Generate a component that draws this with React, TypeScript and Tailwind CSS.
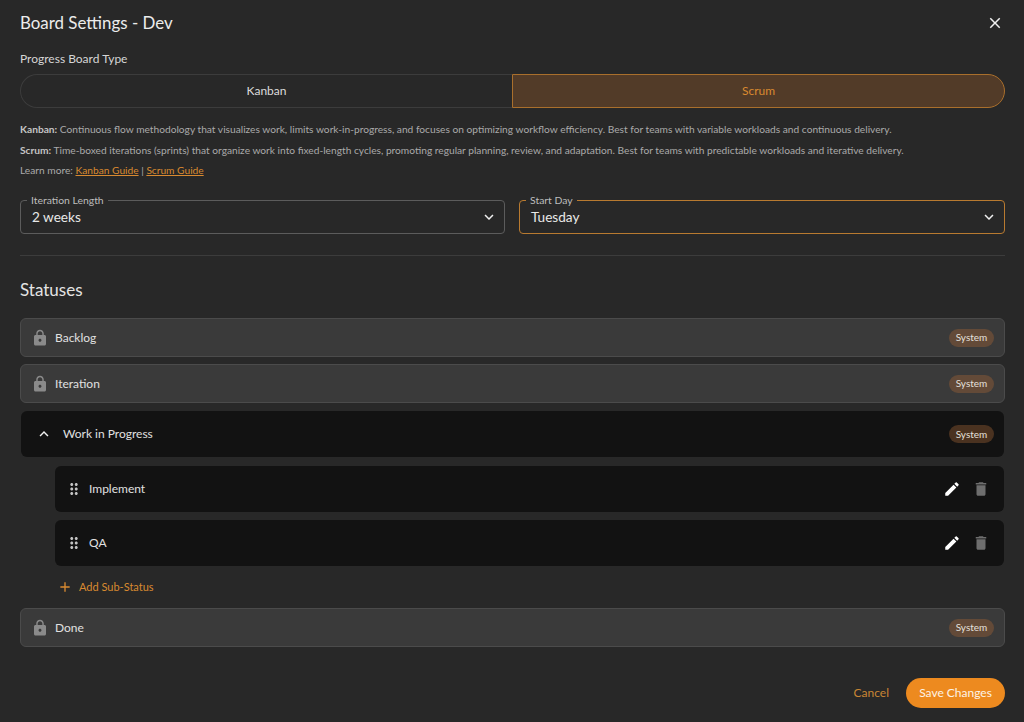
const P = {
  lock: "M18 8h-1V6c0-2.76-2.24-5-5-5S7 3.24 7 6v2H6c-1.1 0-2 .9-2 2v10c0 1.1.9 2 2 2h12c1.1 0 2-.9 2-2V10c0-1.1-.9-2-2-2zm-6 9c-1.1 0-2-.9-2-2s.9-2 2-2 2 .9 2 2-.9 2-2 2zm3.1-9H8.9V6c0-1.71 1.39-3.1 3.1-3.1 1.71 0 3.1 1.39 3.1 3.1v2z",
  up: "m12 8-6 6 1.41 1.41L12 10.83l4.59 4.58L18 14z",
  down: "M7.41 8.59 12 13.17l4.59-4.58L18 10l-6 6-6-6 1.41-1.41z",
  drag: "M11 18c0 1.1-.9 2-2 2s-2-.9-2-2 .9-2 2-2 2 .9 2 2zm-2-8c-1.1 0-2 .9-2 2s.9 2 2 2 2-.9 2-2-.9-2-2-2zm0-6c-1.1 0-2 .9-2 2s.9 2 2 2 2-.9 2-2-.9-2-2-2zm6 4c1.1 0 2-.9 2-2s-.9-2-2-2-2 .9-2 2 .9 2 2 2zm0 2c-1.1 0-2 .9-2 2s.9 2 2 2 2-.9 2-2-.9-2-2-2zm0 6c-1.1 0-2 .9-2 2s.9 2 2 2 2-.9 2-2-.9-2-2-2z",
  edit: "M3 17.25V21h3.75L17.81 9.94l-3.75-3.75L3 17.25zM20.71 7.04c.39-.39.39-1.02 0-1.41l-2.34-2.34a.9959.9959 0 0 0-1.41 0l-1.83 1.83 3.75 3.75 1.83-1.83z",
  trash: "M6 19c0 1.1.9 2 2 2h8c1.1 0 2-.9 2-2V7H6v12zM19 4h-3.5l-1-1h-5l-1 1H5v2h14V4z",
  add: "M19 13h-6v6h-2v-6H5v-2h6V5h2v6h6v2z",
  close: "M19 6.41 17.59 5 12 10.59 6.41 5 5 6.41 10.59 12 5 17.59 6.41 19 12 13.41 17.59 19 19 17.59 13.41 12z",
};

function Icon({ d, className }: { d: string; className: string }) {
  return (
    <svg viewBox="0 0 24 24" fill="currentColor" className={className}>
      <path d={d} />
    </svg>
  );
}

function Badge({ dark }: { dark?: boolean }) {
  return (
    <span
      className={`flex h-[18px] w-[45px] items-center justify-center rounded-full text-[10px] text-[#e4e0dc] ${
        dark ? "bg-[#4a3220]" : "bg-[#634a38]"
      }`}
    >
      System
    </span>
  );
}

function LockedRow({ label }: { label: string }) {
  return (
    <div className="flex h-[39px] items-center rounded-[6px] border border-[#4b4b4b] bg-[#3a3a3a] pl-[10px] pr-[10px]">
      <Icon d={P.lock} className="h-[18px] w-[18px] text-[#8a8a8a]" />
      <span className="ml-[6px] flex-1 text-[12px] text-[#e0e0e0]">{label}</span>
      <Badge />
    </div>
  );
}

function SubRow({ label }: { label: string }) {
  return (
    <div className="flex h-[46px] items-center rounded-[6px] bg-[#121212] pl-[10px] pr-[14px]">
      <Icon d={P.drag} className="h-[18px] w-[18px] text-[#c4c4c4]" />
      <span className="ml-[6px] flex-1 text-[12px] text-[#e0e0e0]">{label}</span>
      <Icon d={P.edit} className="h-[18px] w-[18px] text-white" />
      <Icon d={P.trash} className="ml-[11px] h-[18px] w-[18px] text-[#6e6e6e]" />
    </div>
  );
}

function Select({ label, value, active, className }: { label: string; value: string; active?: boolean; className: string }) {
  return (
    <div
      className={`relative flex h-[34px] items-center justify-between rounded-[4px] border pl-[11px] pr-[6px] ${className} ${
        active ? "border-[#b87a30]" : "border-[#5c5c5c]"
      }`}
    >
      <span className="absolute left-[6px] top-[-7px] bg-[#282828] px-[4px] text-[10.4px] leading-[12px] text-[#bdbdbd]">
        {label}
      </span>
      <span className="text-[13.6px] text-[#e8e8e8]">{value}</span>
      <Icon d={P.down} className="h-[18px] w-[18px] text-[#f0f0f0]" />
    </div>
  );
}

export default function App() {
  return (
    <div
      className="flex h-[722px] w-[1024px] flex-col overflow-hidden bg-[#282828] pl-[20px] pr-[19px] text-[#e8e8e8]"
      style={{ fontFamily: "Lato, 'Liberation Sans', sans-serif" }}
    >
      <div className="flex h-[46px] shrink-0 items-center justify-between">
        <h1 className="text-[16.9px] font-normal leading-[24px] text-[#ececec]">Board Settings - Dev</h1>
        <Icon d={P.close} className="mr-[1px] h-[18px] w-[18px] text-[#f0f0f0]" />
      </div>

      <div className="mt-[4px] text-[12px] leading-[18px] text-[#d6d6d6]">Progress Board Type</div>

      <div className="mt-[6px] flex h-[34px]">
        <div className="flex flex-1 items-center justify-center rounded-l-full border border-r-0 border-[#3c3c3c] text-[12px] text-[#dcdcdc]">
          Kanban
        </div>
        <div className="flex w-[493px] items-center justify-center rounded-r-full border border-[#a96f2c] bg-[#523b28] text-[12px] text-[#d98a30]">
          Scrum
        </div>
      </div>

      <div className="mt-[12px] flex flex-col gap-[2.5px] text-[10.2px] leading-[18px] text-[#aaaaaa]">
        <p>
          <b className="font-bold text-[#c4c4c4]">Kanban:</b> Continuous flow methodology that visualizes work, limits
          work-in-progress, and focuses on optimizing workflow efficiency. Best for teams with variable workloads and
          continuous delivery.
        </p>
        <p>
          <b className="font-bold text-[#c4c4c4]">Scrum:</b> Time-boxed iterations (sprints) that organize work into
          fixed-length cycles, promoting regular planning, review, and adaptation. Best for teams with predictable
          workloads and iterative delivery.
        </p>
        <p>
          Learn more: <a className="text-[#d98a30] underline">Kanban Guide</a> |{" "}
          <a className="text-[#d98a30] underline">Scrum Guide</a>
        </p>
      </div>

      <div className="mt-[21px] flex gap-[14px]">
        <Select label="Iteration Length" value="2 weeks" className="w-[485px]" />
        <Select label="Start Day" value="Tuesday" active className="flex-1" />
      </div>

      <div className="mt-[21px] h-px bg-[#3c3c3c]" />

      <h2 className="mt-[22px] text-[17px] font-normal leading-[24px] text-[#e4e4e4]">Statuses</h2>

      <div className="mt-[16px] flex flex-col">
        <LockedRow label="Backlog" />
        <div className="h-[7px]" />
        <LockedRow label="Iteration" />
        <div className="h-[8px]" />
        <div className="mx-[1px] flex h-[46px] items-center rounded-[6px] bg-[#121212] pl-[14px] pr-[10px]">
          <Icon d={P.up} className="h-[18px] w-[18px] text-[#f0f0f0]" />
          <span className="ml-[10px] flex-1 text-[12px] text-[#e0e0e0]">Work in Progress</span>
          <Badge dark />
        </div>
        <div className="ml-[35px] mr-[1px] mt-[9px] flex flex-col gap-[8px]">
          <SubRow label="Implement" />
          <SubRow label="QA" />
        </div>
        <div className="ml-[37px] mt-[13px] flex h-[16px] items-center text-[11px] text-[#d98a30]">
          <Icon d={P.add} className="h-[16px] w-[16px]" />
          <span className="ml-[6px]">Add Sub-Status</span>
        </div>
        <div className="h-[13px]" />
        <LockedRow label="Done" />
      </div>

      <div className="mt-[31px] flex items-center justify-end">
        <span className="text-[12px] text-[#c98634]">Cancel</span>
        <button className="ml-[17px] h-[30px] w-[99px] rounded-full bg-[#ed8a1f] text-[12px] text-[#fdf3e6]">
          Save Changes
        </button>
      </div>
    </div>
  );
}
